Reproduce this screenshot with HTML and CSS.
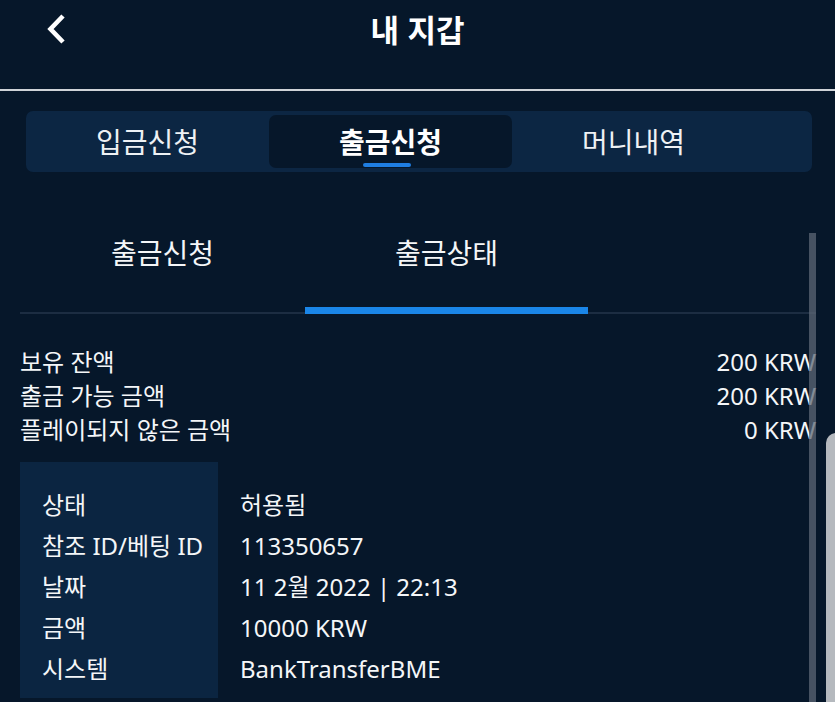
FILE: index.html
```html
<!DOCTYPE html>
<html lang="ko">
<head>
<meta charset="utf-8">
<title>내 지갑</title>
<link rel="stylesheet" href="styles.css">
</head>
<body>
<div class="page">
  <header class="topbar">
    <button class="back" aria-label="뒤로">
      <svg width="20" height="32" viewBox="0 0 20 32"><path d="M17 3 L4.5 16 L17 29" fill="none" stroke="#fff" stroke-width="4.6" stroke-linejoin="miter"/></svg>
    </button>
    <h1 class="title">내 지갑</h1>
  </header>
  <div class="divider"></div>

  <nav class="segment">
    <div class="seg-tab">입금신청</div>
    <div class="seg-tab active">출금신청<span class="seg-mark"></span></div>
    <div class="seg-tab">머니내역</div>
  </nav>

  <main class="content">
    <div class="subtabs">
      <div class="subtab">출금신청</div>
      <div class="subtab active">출금상태</div>
    </div>

    <div class="balances">
      <div class="bal-row"><span>보유 잔액</span><span>200 KRW</span></div>
      <div class="bal-row"><span>출금 가능 금액</span><span>200 KRW</span></div>
      <div class="bal-row"><span>플레이되지 않은 금액</span><span>0 KRW</span></div>
    </div>

    <div class="details">
      <div class="labels">
        <div class="cell">상태</div>
        <div class="cell">참조 ID/베팅 ID</div>
        <div class="cell">날짜</div>
        <div class="cell">금액</div>
        <div class="cell">시스템</div>
      </div>
      <div class="values">
        <div class="cell">허용됨</div>
        <div class="cell">113350657</div>
        <div class="cell">11 2월 2022 | 22:13</div>
        <div class="cell">10000 KRW</div>
        <div class="cell">BankTransferBME</div>
      </div>
    </div>
  </main>

  <div class="scrollbar"></div>
  <div class="edge-widget"></div>
</div>
</body>
</html>
```

FILE: styles.css
```css
html, body {
  margin: 0;
  padding: 0;
  background: #06172a;
}
body {
  font-family: "Noto Sans", "Noto Sans CJK KR", sans-serif;
  color: #f4f6f8;
  width: 835px;
  height: 702px;
  overflow: hidden;
}
.page {
  position: relative;
  width: 835px;
  height: 702px;
  overflow: hidden;
}
.topbar {
  position: relative;
  height: 89px;
  display: flex;
  justify-content: center;
}
.back {
  position: absolute;
  left: 46px;
  top: 13px;
  padding: 0;
  margin: 0;
  border: 0;
  background: none;
  width: 20px;
  height: 32px;
}
.back svg { display: block; }
.title {
  margin: 0;
  margin-top: 9px;
  font-family: "Noto Sans CJK KR", sans-serif;
  font-size: 31px;
  font-weight: 700;
  line-height: 40px;
  height: 40px;
  color: #fff;
}
.divider {
  height: 2px;
  background: #cfd3d8;
}
.segment {
  margin: 20px 23px 0 26px;
  height: 61px;
  box-sizing: border-box;
  padding: 4px 0;
  background: #0c2643;
  border-radius: 7px;
  display: flex;
}
.seg-tab {
  position: relative;
  width: 243px;
  display: flex;
  align-items: center;
  justify-content: center;
  font-family: "Noto Sans CJK KR", sans-serif;
  font-size: 28px;
  color: #eef1f4;
  border-radius: 7px;
  padding-bottom: 2px;
  box-sizing: border-box;
}
.seg-tab.active {
  background: #06172a;
  font-weight: 700;
  color: #fff;
}
.seg-mark {
  position: absolute;
  left: 94px;
  bottom: 1px;
  width: 48px;
  height: 4px;
  border-radius: 2px;
  background: #1f7ee2;
}
.content {
  padding: 28px 19px 0 20px;
}
.subtabs {
  display: flex;
  border-bottom: 2px solid #1c2d42;
}
.subtab {
  width: 285px;
  height: 112px;
  box-sizing: border-box;
  padding-top: 32px;
  text-align: center;
  font-family: "Noto Sans CJK KR", sans-serif;
  font-size: 28px;
  line-height: 40px;
  color: #f4f6f8;
  margin-bottom: -2px;
}
.subtab + .subtab { width: 283px; }
.subtab.active {
  border-bottom: 7px solid #1a86e8;
  height: 114px;
}
.balances {
  margin-top: 31px;
}
.bal-row {
  display: flex;
  justify-content: space-between;
  font-size: 24px;
  line-height: 34px;
  height: 34px;
}
.details {
  margin-top: 15px;
  display: flex;
  height: 236px;
}
.labels {
  width: 198px;
  background: #0b2541;
  box-sizing: border-box;
  padding: 22px 0 0 22px;
}
.values {
  padding: 22px 0 0 22px;
}
.cell {
  height: 41px;
  line-height: 41px;
  font-size: 24px;
  white-space: nowrap;
}
.scrollbar {
  position: absolute;
  left: 809px;
  top: 233px;
  width: 7px;
  bottom: 0;
  background: rgba(92, 103, 117, 0.75);
}
.edge-widget {
  position: absolute;
  left: 826px;
  top: 433px;
  width: 20px;
  bottom: 0;
  background: #b5b9be;
  border-top-left-radius: 10px;
}
```
